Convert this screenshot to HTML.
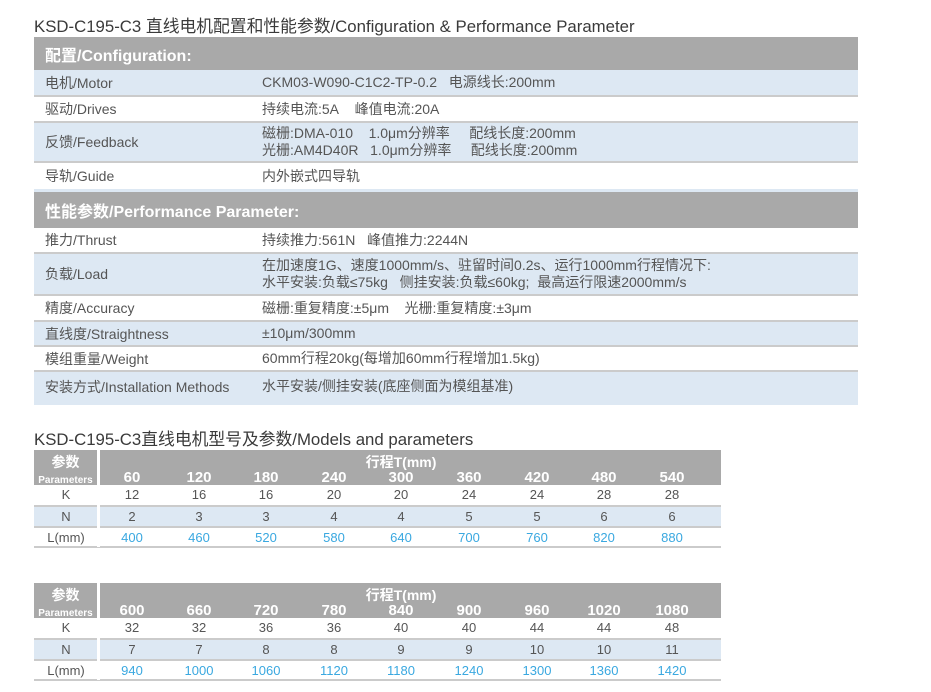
<!DOCTYPE html>
<html><head><meta charset="utf-8"><style>
*{margin:0;padding:0;box-sizing:border-box}
body{width:931px;height:692px;background:#fff;position:relative;overflow:hidden;font-family:"Liberation Sans","Noto Sans CJK SC",sans-serif;color:#555}
.a{position:absolute}
.t{font-size:16.8px;color:#3a3a3a;white-space:nowrap}
.bar{position:absolute;left:34px;width:824px}
.hd{background:#a9a9a9;color:#fff;font-weight:bold;font-size:16px;padding-left:11px;display:flex;align-items:center}
.bl{background:#dde8f3}
.row{font-size:14px;display:flex;align-items:center;border-bottom:2px solid #cbcbcb}
.row .l{position:absolute;left:11px;white-space:nowrap}
.row .r{position:absolute;left:228px;white-space:nowrap;line-height:17px}
.st{position:absolute;left:34px;width:687px}
.sh{background:#a9a9a9;color:#fff;font-weight:bold}
.c{position:absolute;text-align:center;width:60px;white-space:nowrap}
.sr{font-size:13px;border-bottom:2px solid #cbcbcb}
.blue{color:#3aa8e0}
</style></head><body>
<div class="a t" style="left:34px;top:13px">KSD-C195-C3 直线电机配置和性能参数/Configuration &amp; Performance Parameter</div>

<div class="bar hd" style="top:37px;height:33px">配置/Configuration:</div>
<div class="bar row bl" style="top:70px;height:27px"><span class="l">电机/Motor</span><span class="r">CKM03-W090-C1C2-TP-0.2&nbsp;&nbsp;&nbsp;电源线长:200mm</span></div>
<div class="bar row" style="top:97px;height:26px"><span class="l">驱动/Drives</span><span class="r">持续电流:5A&nbsp;&nbsp;&nbsp;&nbsp;峰值电流:20A</span></div>
<div class="bar row bl" style="top:123px;height:40px"><span class="l">反馈/Feedback</span><span class="r">磁栅:DMA-010&nbsp;&nbsp;&nbsp;&nbsp;1.0μm分辨率&nbsp;&nbsp;&nbsp;&nbsp;&nbsp;配线长度:200mm<br>光栅:AM4D40R&nbsp;&nbsp;&nbsp;1.0μm分辨率&nbsp;&nbsp;&nbsp;&nbsp;&nbsp;配线长度:200mm</span></div>
<div class="bar row" style="top:163px;height:26px;border-bottom:none"><span class="l">导轨/Guide</span><span class="r">内外嵌式四导轨</span></div>
<div class="bar bl" style="top:189px;height:3px"></div>
<div class="bar hd" style="top:192px;height:36px">性能参数/Performance Parameter:</div>
<div class="bar row" style="top:228px;height:26px"><span class="l">推力/Thrust</span><span class="r">持续推力:561N&nbsp;&nbsp;&nbsp;峰值推力:2244N</span></div>
<div class="bar row bl" style="top:254px;height:42px"><span class="l">负载/Load</span><span class="r">在加速度1G、速度1000mm/s、驻留时间0.2s、运行1000mm行程情况下:<br>水平安装:负载≤75kg&nbsp;&nbsp;&nbsp;侧挂安装:负载≤60kg;&nbsp;&nbsp;最高运行限速2000mm/s</span></div>
<div class="bar row" style="top:296px;height:26px"><span class="l">精度/Accuracy</span><span class="r">磁栅:重复精度:±5μm&nbsp;&nbsp;&nbsp;&nbsp;光栅:重复精度:±3μm</span></div>
<div class="bar row bl" style="top:322px;height:25px"><span class="l">直线度/Straightness</span><span class="r">±10μm/300mm</span></div>
<div class="bar row" style="top:347px;height:25px"><span class="l">模组重量/Weight</span><span class="r">60mm行程20kg(每增加60mm行程增加1.5kg)</span></div>
<div class="bar row bl" style="top:372px;height:33px;border-bottom:none;align-items:flex-start;padding-top:5px"><span class="l" style="top:5px">安装方式/Installation Methods</span><span class="r" style="top:6px">水平安装/侧挂安装(底座侧面为模组基准)</span></div>

<div class="a t" style="left:34px;top:426px">KSD-C195-C3直线电机型号及参数/Models and parameters</div>

<div id="t1"></div><div id="t2"></div>
<script>
function tbl(top,strokes,K,N,L){
 var xs=[132,199,266,334,401,469,537,604,672];
 var h='';
 h+='<div class="st sh" style="top:'+top+'px;height:35px"></div>';
 h+='<div class="a" style="left:97px;top:'+top+'px;width:3px;height:97px;background:#fff;z-index:2"></div>';
 h+='<div class="a" style="left:34px;top:'+(top+4)+'px;width:63px;text-align:center;color:#fff;font-weight:bold;font-size:14px;line-height:16px">参数<br><span style="font-size:10px">Parameters</span></div>';
 h+='<div class="a" style="left:341px;top:'+(top+2)+'px;width:120px;text-align:center;color:#fff;font-weight:bold;font-size:14px">行程T(mm)</div>';
 for(var i=0;i<9;i++){h+='<div class="c" style="left:'+(xs[i]-30)+'px;top:'+(top+19)+'px;color:#fff;font-weight:bold;font-size:15px">'+strokes[i]+'</div>';}
 var rows=[['K',K,'',35,22],['N',N,'bl',57,21],['L(mm)',L,'',78,20]];
 rows.forEach(function(r){
  h+='<div class="st sr '+r[2]+'" style="top:'+(top+r[3])+'px;height:'+r[4]+'px"></div>';
  h+='<div class="c" style="left:36px;top:'+(top+r[3]+2)+'px;font-size:13px">'+r[0]+'</div>';
  for(var i=0;i<9;i++){h+='<div class="c'+(r[0]=='L(mm)'?' blue':'')+'" style="left:'+(xs[i]-30)+'px;top:'+(top+r[3]+2)+'px;font-size:13px">'+r[1][i]+'</div>';}
 });
 return h;
}
document.getElementById('t1').innerHTML=tbl(450,[60,120,180,240,300,360,420,480,540],[12,16,16,20,20,24,24,28,28],[2,3,3,4,4,5,5,6,6],[400,460,520,580,640,700,760,820,880]);
document.getElementById('t2').innerHTML=tbl(583,[600,660,720,780,840,900,960,1020,1080],[32,32,36,36,40,40,44,44,48],[7,7,8,8,9,9,10,10,11],[940,1000,1060,1120,1180,1240,1300,1360,1420]);
</script>
</body></html>
